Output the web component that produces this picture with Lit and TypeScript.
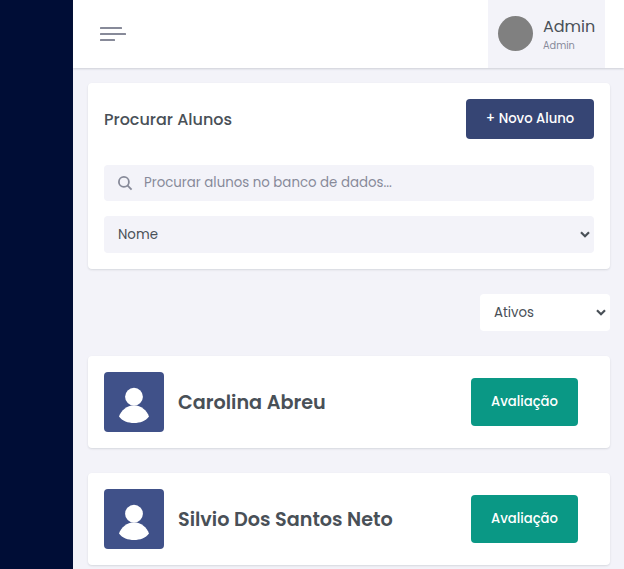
import { LitElement, html, css, svg } from "lit";
import { customElement } from "lit/decorators.js";

const chevron = html`<svg class="chevron" width="10" height="7" viewBox="0 0 10 7">
  <path d="M1 1.2L5 5.2L9 1.2" fill="none" stroke="#495057" stroke-width="2.2" />
</svg>`;

const person = svg`<circle cx="30" cy="24.7" r="8.9" />
  <path d="M15 44.5C17.2 38.6 22.8 33.3 30 33.3S42.8 38.6 45 44.5C41.8 49 36 51 30 51S18.2 49 15 44.5Z" />`;

@customElement("app-root")
export class AppRoot extends LitElement {
  static styles = css`
    :host {
      display: flex;
      height: 569px;
      overflow: hidden;
      background: #f3f3f9;
      color: #495057;
      font: 400 13.333px/20px Poppins, Inter, sans-serif;
    }
    * { box-sizing: border-box; }
    .sidebar { width: 73px; flex: none; background: #000d36; }
    .main { flex: 1; min-width: 0; display: flex; flex-direction: column; }
    .topbar {
      height: 68px;
      flex: none;
      display: flex;
      justify-content: space-between;
      align-items: center;
      padding: 0 19px 0 27px;
      background: #fff;
      box-shadow: 0 1px 2px rgba(56, 65, 74, 0.2);
    }
    .menu { display: grid; gap: 4px; }
    .bar { height: 2px; width: 22px; background: #878a99; border-radius: 0.5px; }
    .bar.long { width: 26px; }
    .bar.short { width: 15px; }
    .user {
      width: 117px;
      height: 68px;
      display: flex;
      align-items: center;
      gap: 10px;
      padding: 0 10px 1px;
      background: #f3f3f9;
    }
    .photo { width: 35px; height: 35px; flex: none; border-radius: 50%; background: #808080; }
    .user-name { font-size: 16px; line-height: 22px; white-space: nowrap; padding-top: 2px; }
    .user-role { font-size: 9.75px; line-height: 15px; color: #878a99; }
    .content { padding: 15px 14px 0 15px; display: flex; flex-direction: column; }
    .card { background: #fff; border-radius: 4px; box-shadow: 0 1px 2px rgba(56, 65, 74, 0.15); }
    .search-card { height: 186px; padding: 16px; }
    .heading { display: flex; align-items: center; justify-content: space-between; height: 40px; margin-bottom: 26px; }
    .title { font-size: 16px; font-weight: 500; padding-top: 2px; }
    .button {
      display: grid;
      place-items: center;
      border-radius: 4px;
      color: #fff;
      font-size: 13.2px;
      font-weight: 500;
      white-space: nowrap;
    }
    .create { width: 128px; height: 40px; background: #364574; }
    .assess { width: 107px; height: 48px; background: #0a9885; margin-right: 16px; }
    .field { display: flex; align-items: center; border-radius: 4px; background: #f3f3f9; }
    .search { height: 36px; padding: 0 14px; gap: 11px; color: #878a99; }
    .select { height: 37px; padding: 0 4px 0 14px; justify-content: space-between; }
    .by-name { margin-top: 15px; }
    .status { width: 130px; margin: 25px 0; align-self: flex-end; background: #fff; }
    .student { height: 92px; padding: 16px; display: flex; align-items: center; margin-bottom: 25px; }
    .avatar { width: 60px; height: 60px; border-radius: 4px; background: #405189; fill: #fff; }
    .student-name { flex: 1; margin-left: 14px; padding-top: 2px; font-size: 19.2px; line-height: 24px; font-weight: 600; white-space: nowrap; }
  `;

  private students = ["Carolina Abreu", "Silvio Dos Santos Neto"];

  render() {
    return html`
      <div class="sidebar"></div>
      <div class="main">
        <header class="topbar">
          <div class="menu">
            <div class="bar"></div>
            <div class="bar long"></div>
            <div class="bar short"></div>
          </div>
          <div class="user">
            <div class="photo"></div>
            <div>
              <div class="user-name">Admin</div>
              <div class="user-role">Admin</div>
            </div>
          </div>
        </header>
        <main class="content">
          <section class="card search-card">
            <div class="heading">
              <div class="title">Procurar Alunos</div>
              <div class="button create">+ Novo Aluno</div>
            </div>
            <div class="field search">
              <svg width="15" height="15" viewBox="0 0 15 15" fill="none" stroke="#878a99" stroke-width="1.8">
                <circle cx="5.9" cy="5.9" r="5" />
                <path d="M9.4 9.4L13.6 13.6" />
              </svg>
              <span>Procurar alunos no banco de dados...</span>
            </div>
            <div class="field select by-name"><span>Nome</span>${chevron}</div>
          </section>
          <div class="field select status"><span>Ativos</span>${chevron}</div>
          ${this.students.map(
            (name) => html`
              <section class="card student">
                <svg class="avatar" viewBox="0 0 60 60">${person}</svg>
                <div class="student-name">${name}</div>
                <div class="button assess">Avaliação</div>
              </section>
            `
          )}
        </main>
      </div>
    `;
  }
}
